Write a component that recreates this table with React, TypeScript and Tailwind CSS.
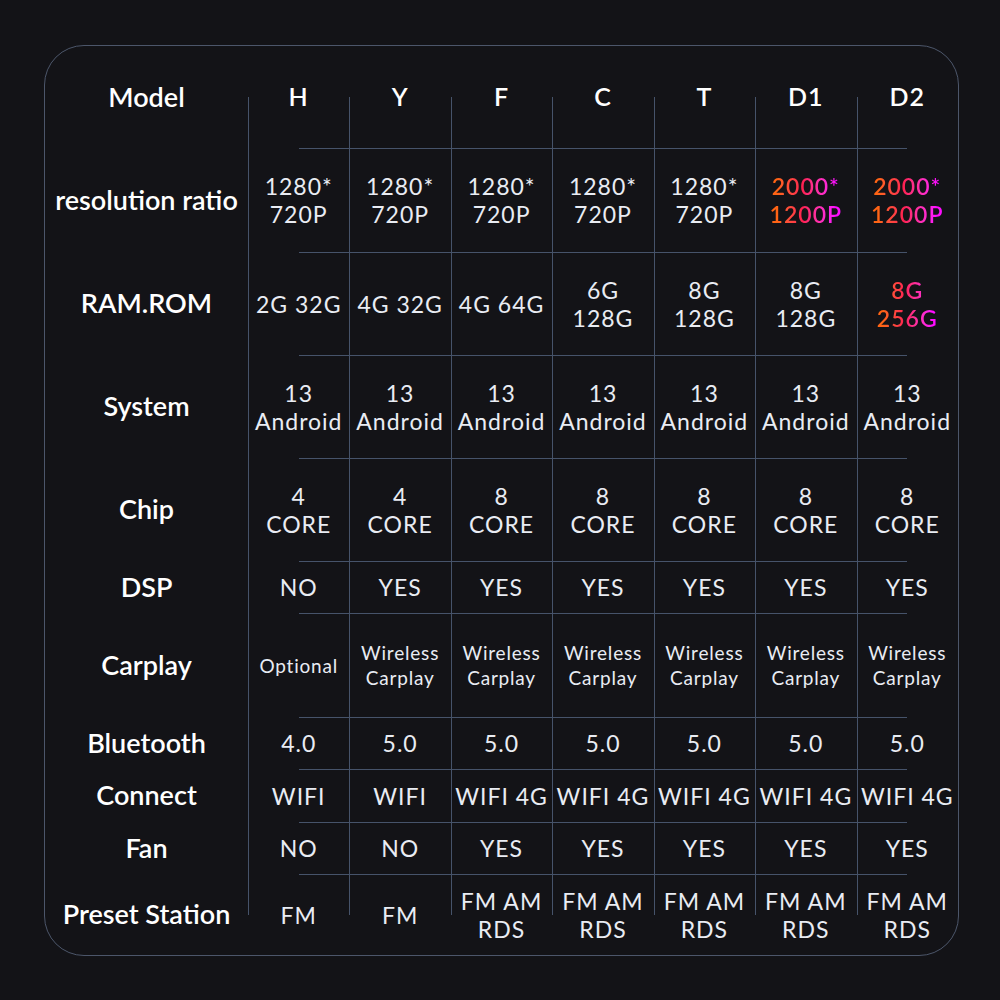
import React from "react";

type Cell = string | string[] | { g: string[] } | { s: string[] };

const cols = ["H", "Y", "F", "C", "T", "D1", "D2"];

const rows: { label: string; h: string; cells: Cell[] }[] = [
  {
    label: "resolution ratio",
    h: "h-[104px]",
    cells: [
      ["1280*", "720P"],
      ["1280*", "720P"],
      ["1280*", "720P"],
      ["1280*", "720P"],
      ["1280*", "720P"],
      { g: ["2000*", "1200P"] },
      { g: ["2000*", "1200P"] },
    ],
  },
  {
    label: "RAM.ROM",
    h: "h-[103px]",
    cells: ["2G 32G", "4G 32G", "4G 64G", ["6G", "128G"], ["8G", "128G"], ["8G", "128G"], { g: ["8G", "256G"] }],
  },
  {
    label: "System",
    h: "h-[103px]",
    cells: Array.from({ length: 7 }, () => ["13", "Android"]),
  },
  {
    label: "Chip",
    h: "h-[103px]",
    cells: [["4", "CORE"], ["4", "CORE"], ["8", "CORE"], ["8", "CORE"], ["8", "CORE"], ["8", "CORE"], ["8", "CORE"]],
  },
  { label: "DSP", h: "h-[52px]", cells: ["NO", "YES", "YES", "YES", "YES", "YES", "YES"] },
  {
    label: "Carplay",
    h: "h-[104px]",
    cells: [
      { s: ["Optional"] },
      { s: ["Wireless", "Carplay"] },
      { s: ["Wireless", "Carplay"] },
      { s: ["Wireless", "Carplay"] },
      { s: ["Wireless", "Carplay"] },
      { s: ["Wireless", "Carplay"] },
      { s: ["Wireless", "Carplay"] },
    ],
  },
  { label: "Bluetooth", h: "h-[52px]", cells: ["4.0", "5.0", "5.0", "5.0", "5.0", "5.0", "5.0"] },
  { label: "Connect", h: "h-[53px]", cells: ["WIFI", "WIFI", "WIFI 4G", "WIFI 4G", "WIFI 4G", "WIFI 4G", "WIFI 4G"] },
  { label: "Fan", h: "h-[52px]", cells: ["NO", "NO", "YES", "YES", "YES", "YES", "YES"] },
  {
    label: "Preset Station",
    h: "h-[81px]",
    cells: ["FM", "FM", ["FM AM", "RDS"], ["FM AM", "RDS"], ["FM AM", "RDS"], ["FM AM", "RDS"], ["FM AM", "RDS"]],
  },
];

const vFull = "before:absolute before:left-0 before:w-px before:bg-[#46536a] before:top-0 before:bottom-0";
const vBottomHalf = "before:absolute before:left-0 before:w-px before:bg-[#46536a] before:top-1/2 before:bottom-0";
const vTopHalf = "before:absolute before:left-0 before:w-px before:bg-[#46536a] before:top-0 before:bottom-1/2";

const hRightHalf = "after:absolute after:top-0 after:h-px after:bg-[#46536a] after:left-1/2 after:right-0";
const hFull = "after:absolute after:top-0 after:h-px after:bg-[#46536a] after:left-0 after:right-0";
const hLeftHalf = "after:absolute after:top-0 after:h-px after:bg-[#46536a] after:left-0 after:right-1/2";

function CellContent({ c }: { c: Cell }) {
  if (typeof c === "string") {
    return <div className="text-[23px] leading-[28px] whitespace-nowrap text-[#e9ecf3] tracking-[1px]">{c}</div>;
  }
  if (Array.isArray(c)) {
    return (
      <div className="text-[23px] leading-[28px] whitespace-nowrap text-[#e9ecf3] text-center tracking-[1px]">
        {c.map((l, i) => (
          <div key={i}>{l}</div>
        ))}
      </div>
    );
  }
  if ("g" in c) {
    return (
      <div className="inline-block text-[23px] leading-[28px] whitespace-nowrap text-center font-semibold tracking-[1px] bg-linear-to-r from-[#ff6414] from-10% via-[#ff2050] via-45% to-[#ff0cff] to-90% bg-clip-text text-transparent">
        {c.g.map((l, i) => (
          <div key={i}>{l}</div>
        ))}
      </div>
    );
  }
  return (
    <div className="text-[19px] leading-[25px] whitespace-nowrap text-[#e9ecf3] text-center tracking-[0.8px]">
      {c.s.map((l, i) => (
        <div key={i}>{l}</div>
      ))}
    </div>
  );
}

export default function App() {
  return (
    <div
      className="w-[1000px] h-[1000px] bg-[#131317] pt-[45px] pl-[44px]"
      style={{ fontFamily: "Lato, 'Noto Sans', 'Liberation Sans', sans-serif" }}
    >
      <div className="w-[915px] h-[911px] rounded-[40px] border border-[#4c566a] flex flex-col">
        {/* header */}
        <div className="flex h-[102px]">
          <div className="w-[203px] shrink-0 flex items-center justify-center text-white text-[27px] font-semibold">
            Model
          </div>
          {cols.map((c) => (
            <div
              key={c}
              className={`relative flex-1 flex items-center justify-center text-white text-[25px] font-semibold tracking-[1px] ${vBottomHalf}`}
            >
              {c}
            </div>
          ))}
        </div>
        {rows.map((r, ri) => {
          const last = ri === rows.length - 1;
          return (
            <div key={r.label} className={`flex ${r.h}`}>
              <div className="w-[203px] shrink-0 flex items-center justify-center text-white text-[27px] font-semibold whitespace-nowrap">
                {r.label}
              </div>
              {r.cells.map((c, ci) => {
                const v = last ? vTopHalf : vFull;
                const h = ci === 0 ? hRightHalf : ci === 6 ? hLeftHalf : hFull;
                return (
                  <div key={ci} className={`relative flex-1 min-w-0 flex items-center justify-center ${v} ${h}`}>
                    <CellContent c={c} />
                  </div>
                );
              })}
            </div>
          );
        })}
      </div>
    </div>
  );
}
